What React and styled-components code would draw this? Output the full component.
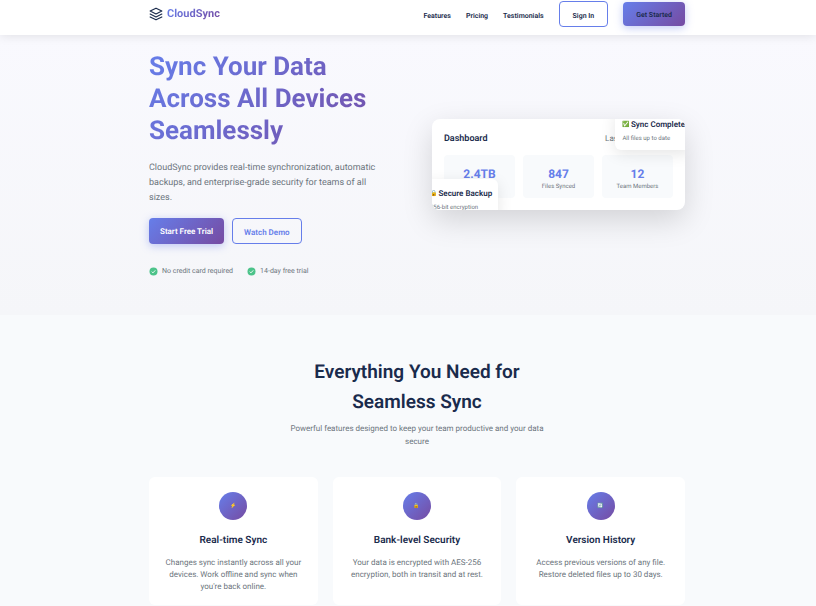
import React from "react";
import styled, { createGlobalStyle, css } from "styled-components";

const brand = "linear-gradient(135deg, #667eea 0%, #764ba2 100%)";

const GlobalStyle = createGlobalStyle`
  *, *::before, *::after { box-sizing: border-box; }
  body {
    margin: 0;
    background: #f8fafc;
    color: #1a2b4c;
    font-family: Roboto, "Noto Color Emoji", sans-serif;
    text-rendering: geometricPrecision;
    overflow-x: hidden;
  }
  h1, h2, h3, p, ul { margin: 0; padding: 0; }
  ul { list-style: none; }
  a { color: inherit; text-decoration: none; }
  button { text-rendering: inherit; }
`;

const gutters = css`
  padding-left: 149px;
  padding-right: 131px;
`;

const gradientText = css`
  background: ${brand};
  background-clip: text;
  -webkit-background-clip: text;
  color: transparent;
`;

const Header = styled.header`
  ${gutters}
  position: relative;
  display: flex;
  align-items: flex-start;
  justify-content: space-between;
  padding-bottom: 8px;
  background: #fff;
  box-shadow: 0 1px 10px rgba(0, 0, 0, 0.1);
`;

const Logo = styled.a`
  display: flex;
  align-items: center;
  gap: 4px;
  padding-top: 7px;
  svg { display: block; }
`;

const LogoText = styled.span`
  ${gradientText}
  font-size: 11px;
  line-height: 14px;
  font-weight: 700;
`;

const Nav = styled.nav`
  display: flex;
  align-items: center;
  gap: 15px;
  padding-top: 1px;
  font-size: 7px;
  font-weight: 600;
`;

const NavLink = styled.a`
  line-height: 12px;
  padding-top: 3px;
`;

const Button = styled.button`
  display: flex;
  align-items: center;
  justify-content: center;
  height: ${(p) => (p.$compact ? 24 : 26)}px;
  padding: ${(p) => (p.$primary ? 2 : 4)}px ${(p) => p.$inset}px 0;
  border: ${(p) => (p.$primary ? "0" : "1px solid #667eea")};
  border-radius: 4px;
  background: ${(p) => (p.$primary ? brand : "transparent")};
  box-shadow: ${(p) => (p.$primary ? "0 2px 8px rgba(102, 126, 234, 0.4)" : "none")};
  color: ${(p) => p.$color};
  font: 600 ${(p) => p.$size}px/12px Roboto, sans-serif;
  white-space: nowrap;
  cursor: pointer;
`;

const Hero = styled.section`
  ${gutters}
  display: grid;
  grid-template-columns: 1fr 1fr;
  gap: 30px;
  align-items: center;
  padding-top: 16px;
  padding-bottom: 38px;
  background: linear-gradient(180deg, #f9f9fe 0%, #f5f6f9 100%);
`;

const Title = styled.h1`
  ${gradientText}
  font-size: 26px;
  line-height: 32px;
  font-weight: 700;
`;

const Lead = styled.p`
  max-width: 240px;
  margin-top: 14px;
  color: #6c757d;
  font-size: 9px;
  line-height: 15px;
`;

const Actions = styled.div`
  display: flex;
  gap: 8px;
  margin-top: 12px;
`;

const Perks = styled.ul`
  display: flex;
  gap: 14px;
  margin-top: 21px;
`;

const Perk = styled.li`
  display: flex;
  align-items: center;
  gap: 4px;
  color: #6c757d;
  font-size: 7px;
  line-height: 12px;
  svg { display: block; }
`;

const Dashboard = styled.div`
  position: relative;
  overflow: hidden;
  padding: 12px;
  border-radius: 8px;
  background: #fff;
  box-shadow: 0 10px 30px rgba(0, 0, 0, 0.15);
`;

const DashboardHead = styled.div`
  display: flex;
  justify-content: space-between;
  align-items: center;
  line-height: 16px;
  span { color: #6c757d; font-size: 8px; }
`;

const DashboardTitle = styled.h3`
  font-size: 9px;
  font-weight: 600;
`;

const Stats = styled.div`
  display: grid;
  grid-template-columns: repeat(3, 1fr);
  gap: 8px;
  margin-top: 8px;
`;

const Stat = styled.div`
  padding: 12px 4px 6px;
  border-radius: 4px;
  background: #f8fafc;
  text-align: center;
  color: #6c757d;
  font-size: 6px;
  line-height: 10px;
  strong {
    display: block;
    color: #667eea;
    font-size: 12px;
    line-height: 15px;
    font-weight: 700;
  }
`;

const Floating = styled.div`
  position: absolute;
  ${(p) => (p.$corner === "top" ? "top: -9px; right: -6px;" : "bottom: -9px; left: -9px;")}
  padding: 9px 6px 5px 7px;
  border-radius: 6px;
  background: #fff;
  box-shadow: 0 4px 15px rgba(0, 0, 0, 0.1);
  white-space: nowrap;
`;

const FloatingTitle = styled.strong`
  display: flex;
  align-items: center;
  gap: 1px;
  font-size: 8px;
  line-height: 12px;
  font-weight: 600;
`;

const Emoji = styled.span`
  font-size: 6px;
`;

const FloatingNote = styled.span`
  display: block;
  margin-top: 2px;
  color: #6c757d;
  font-size: 6px;
  line-height: 12px;
`;

const Features = styled.section`
  ${gutters}
  padding-top: 42px;
  background: #f8fafc;
`;

const Intro = styled.div`
  max-width: 270px;
  margin: 0 auto;
  text-align: center;
  p { margin-top: 5px; color: #6c757d; font-size: 8px; line-height: 13px; }
`;

const Heading = styled.h2`
  font-size: 19px;
  line-height: 30px;
  font-weight: 600;
`;

const Cards = styled.div`
  display: grid;
  grid-template-columns: repeat(3, 1fr);
  gap: 15px;
  margin-top: 29px;
`;

const Card = styled.article`
  padding: 15px 15px 12px;
  border-radius: 6px;
  background: #fff;
  text-align: center;
  h3 { margin-top: 13px; font-size: 10px; line-height: 15px; font-weight: 600; }
  p { margin-top: 9px; color: #6c757d; font-size: 8px; line-height: 12px; }
`;

const CardIcon = styled.div`
  display: grid;
  place-items: center;
  width: 28px;
  height: 28px;
  margin: 0 auto;
  border-radius: 50%;
  background: ${brand};
  font-size: 5px;
`;

const Check = () => (
  <svg width="9" height="9" viewBox="0 0 18 18" aria-hidden="true">
    <circle cx="9" cy="9" r="8" fill="#4cc38a" />
    <path d="M5.5 9.3l2.4 2.4 4.6-5" fill="none" stroke="#fff" strokeWidth="1.8" />
  </svg>
);

const stats = [["2.4TB", "Data Synced"], ["847", "Files Synced"], ["12", "Team Members"]];
const features = [
  ["⚡", "Real-time Sync", "Changes sync instantly across all your devices. Work offline and sync when you're back online."],
  ["🔒", "Bank-level Security", "Your data is encrypted with AES-256 encryption, both in transit and at rest."],
  ["🔄", "Version History", "Access previous versions of any file. Restore deleted files up to 30 days."],
];

export default function App() {
  return (
    <>
      <GlobalStyle />
      <Header>
        <Logo href="#">
          <svg width="14" height="14" viewBox="0 0 24 24" fill="none" stroke="#1a2b4c" strokeWidth="2" strokeLinejoin="round" strokeLinecap="round" aria-hidden="true">
            <path d="M12 2L2 7l10 5 10-5-10-5zM2 12l10 5 10-5M2 17l10 5 10-5" />
          </svg>
          <LogoText>CloudSync</LogoText>
        </Logo>
        <Nav>
          <NavLink href="#features">Features</NavLink>
          <NavLink href="#pricing">Pricing</NavLink>
          <NavLink href="#testimonials">Testimonials</NavLink>
          <Button $inset={13} $size={7} $color="#1a2b4c">Sign In</Button>
          <Button $primary $compact $inset={13} $size={7} $color="#1a2b4c">Get Started</Button>
        </Nav>
      </Header>
      <main>
        <Hero>
          <div>
            <Title>Sync Your Data Across All Devices Seamlessly</Title>
            <Lead>CloudSync provides real-time synchronization, automatic backups, and enterprise-grade security for teams of all sizes.</Lead>
            <Actions>
              <Button $primary $inset={11} $size={8} $color="#fff">Start Free Trial</Button>
              <Button $inset={11} $size={8} $color="#667eea">Watch Demo</Button>
            </Actions>
            <Perks>
              <Perk><Check />No credit card required</Perk>
              <Perk><Check />14-day free trial</Perk>
            </Perks>
          </div>
          <Dashboard>
            <DashboardHead>
              <DashboardTitle>Dashboard</DashboardTitle>
              <span>Last sync: just now</span>
            </DashboardHead>
            <Stats>
              {stats.map(([value, label]) => (
                <Stat key={label}><strong>{value}</strong>{label}</Stat>
              ))}
            </Stats>
            <Floating $corner="top">
              <FloatingTitle><Emoji>✅</Emoji>Sync Complete</FloatingTitle>
              <FloatingNote>All files up to date</FloatingNote>
            </Floating>
            <Floating>
              <FloatingTitle><Emoji>🔒</Emoji>Secure Backup</FloatingTitle>
              <FloatingNote>256-bit encryption</FloatingNote>
            </Floating>
          </Dashboard>
        </Hero>
        <Features id="features">
          <Intro>
            <Heading>Everything You Need for Seamless Sync</Heading>
            <p>Powerful features designed to keep your team productive and your data secure</p>
          </Intro>
          <Cards>
            {features.map(([icon, title, text]) => (
              <Card key={title}>
                <CardIcon aria-hidden="true">{icon}</CardIcon>
                <h3>{title}</h3>
                <p>{text}</p>
              </Card>
            ))}
          </Cards>
        </Features>
      </main>
    </>
  );
}
